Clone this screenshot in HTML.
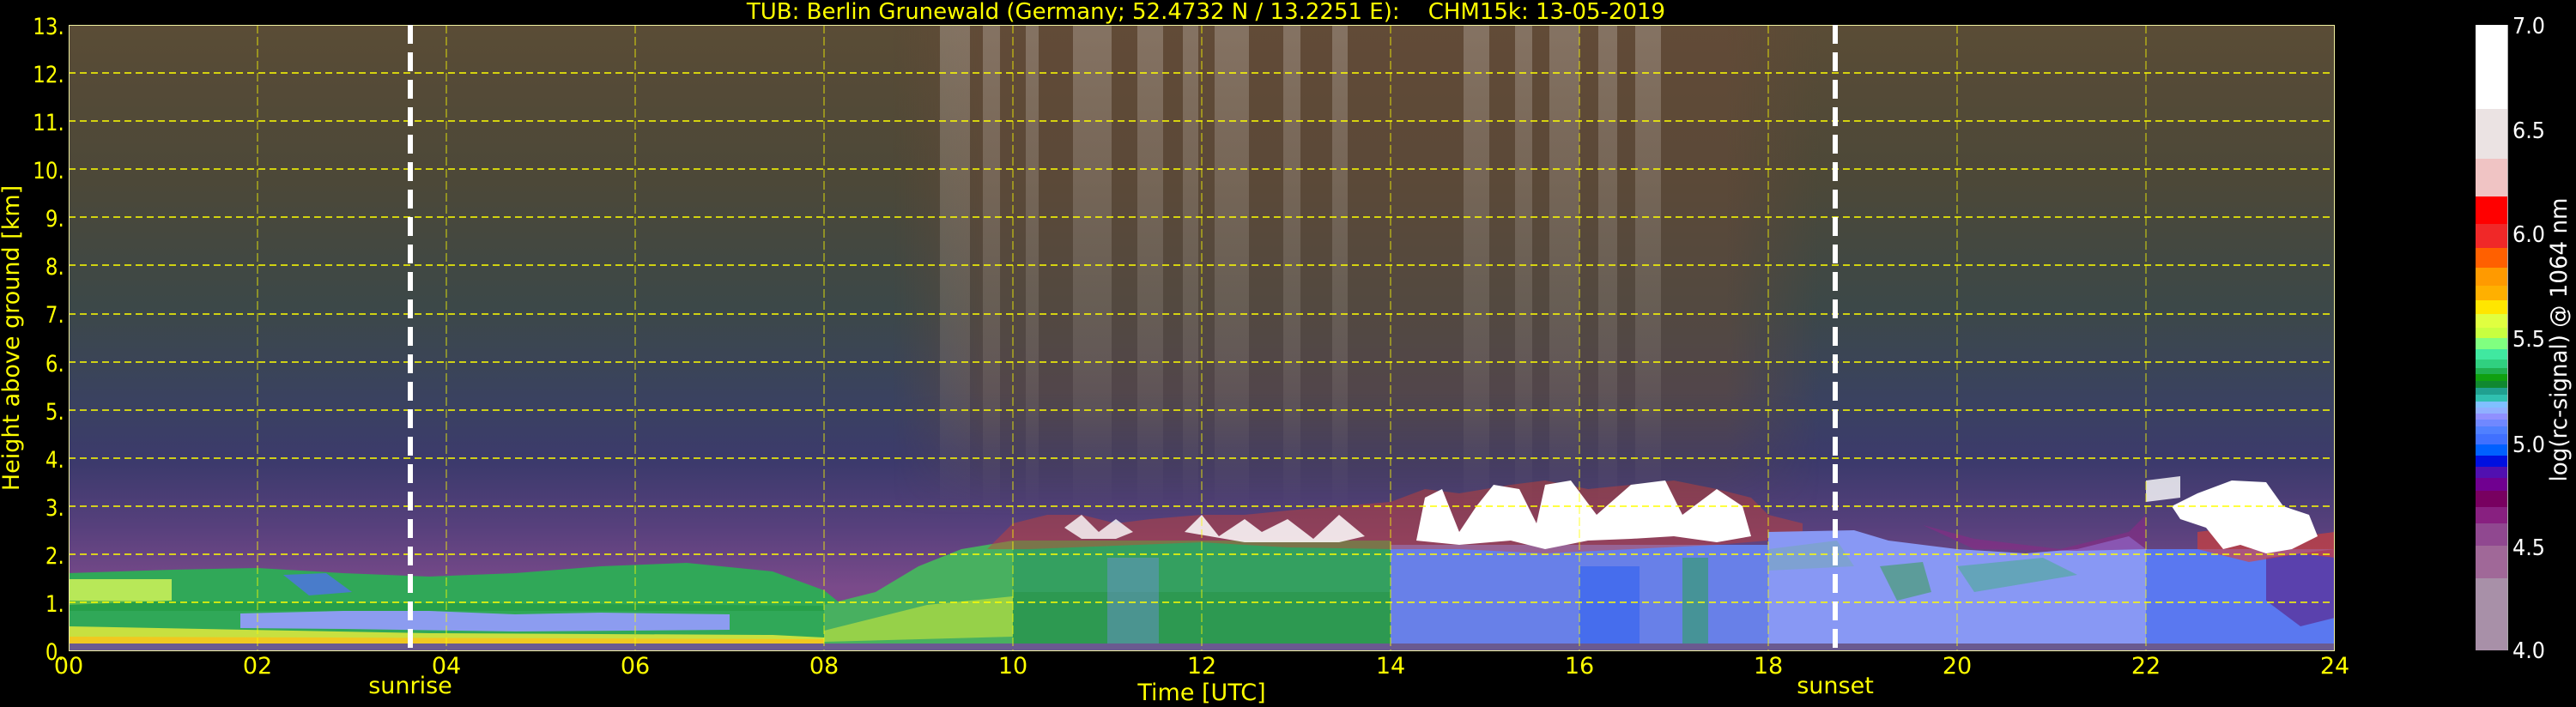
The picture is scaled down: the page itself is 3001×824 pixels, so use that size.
<!DOCTYPE html>
<html><head><meta charset="utf-8"><style>
html,body{margin:0;padding:0;background:#000;width:3001px;height:824px;overflow:hidden}
svg{display:block}
text{font-family:"DejaVu Sans","Liberation Sans",sans-serif}
</style></head><body>
<svg width="3001" height="824" viewBox="0 0 3001 824" xmlns="http://www.w3.org/2000/svg">
<defs>
<linearGradient id="sky" x1="0" y1="29" x2="0" y2="758" gradientUnits="userSpaceOnUse">
<stop offset="0" stop-color="#5a4c36"/>
<stop offset="0.25" stop-color="#4c4838"/>
<stop offset="0.45" stop-color="#3c4848"/>
<stop offset="0.6" stop-color="#3a4260"/>
<stop offset="0.7" stop-color="#3c3a6c"/>
<stop offset="0.8" stop-color="#56407c"/>
<stop offset="0.9" stop-color="#7a4a8a"/>
<stop offset="1" stop-color="#7a4a8a"/>
</linearGradient>
<linearGradient id="hband" x1="0" y1="0" x2="1" y2="0">
<stop offset="0" stop-color="#6a4a38" stop-opacity="0"/>
<stop offset="0.1" stop-color="#6a4a38" stop-opacity="0.5"/>
<stop offset="0.9" stop-color="#6a4a38" stop-opacity="0.5"/>
<stop offset="1" stop-color="#6a4a38" stop-opacity="0"/>
</linearGradient>
<linearGradient id="vfade" x1="0" y1="29" x2="0" y2="600" gradientUnits="userSpaceOnUse">
<stop offset="0" stop-color="#fff" stop-opacity="1"/>
<stop offset="0.75" stop-color="#fff" stop-opacity="1"/>
<stop offset="1" stop-color="#fff" stop-opacity="0"/>
</linearGradient>
<mask id="fm"><rect x="1000" y="29" width="1200" height="571" fill="url(#vfade)"/></mask>
<linearGradient id="wfade" x1="0" y1="29" x2="0" y2="600" gradientUnits="userSpaceOnUse">
<stop offset="0" stop-color="#d8d0c8" stop-opacity="0.3"/>
<stop offset="0.7" stop-color="#c0b8b0" stop-opacity="0.15"/>
<stop offset="1" stop-color="#c0b8b0" stop-opacity="0"/>
</linearGradient>
</defs>
<rect x="80" y="29" width="2640" height="729" fill="url(#sky)"/>
<rect x="1040" y="29" width="1080" height="571" fill="url(#hband)" mask="url(#fm)"/>
<g fill="url(#wfade)">
<rect x="1095" y="29" width="35" height="571"/>
<rect x="1145" y="29" width="20" height="571"/>
<rect x="1195" y="29" width="15" height="571"/>
<rect x="1250" y="29" width="45" height="571"/>
<rect x="1325" y="29" width="30" height="571"/>
<rect x="1378" y="29" width="18" height="571"/>
<rect x="1415" y="29" width="40" height="571"/>
<rect x="1495" y="29" width="20" height="571"/>
<rect x="1552" y="29" width="18" height="571"/>
<rect x="1705" y="29" width="30" height="571"/>
<rect x="1765" y="29" width="20" height="571"/>
<rect x="1805" y="29" width="35" height="571"/>
<rect x="1862" y="29" width="22" height="571"/>
<rect x="1905" y="29" width="30" height="571"/>
</g>
<!-- boundary layer 00-08 -->
<path d="M80 668 L200 664 L300 662 L400 668 L500 672 L600 668 L700 660 L800 656 L900 666 L960 688 L1000 720 L1020 740 L1020 752 L80 752Z" fill="#30a858"/>
<path d="M80 675 L200 675 L200 700 L80 705Z" fill="#b8e858"/>
<path d="M280 715 L400 712 L500 712 L600 716 L700 714 L850 716 L850 734 L600 736 L400 733 L280 732Z" fill="#8c9cf0"/>
<path d="M80 730 L500 738 L900 740 L1000 745 L1000 752 L80 752Z" fill="#c8e040"/>
<path d="M80 742 L960 745 L960 750 L80 750Z" fill="#f0c820"/>
<path d="M80 700 L960 706 L960 712 L80 712Z" fill="#209a40" opacity="0.6"/>
<path d="M330 670 L380 668 L410 690 L360 694Z" fill="#5070e8" opacity="0.8"/>
<!-- 08-10 -->
<path d="M960 705 L1020 690 L1070 660 L1120 640 L1180 630 L1180 752 L960 752Z" fill="#48b060"/>
<path d="M960 735 L1080 705 L1180 695 L1180 742 L960 748Z" fill="#b8e040" opacity="0.7"/>
<!-- 10-14 green -->
<rect x="1180" y="630" width="440" height="122" fill="#34a060"/>
<rect x="1180" y="690" width="440" height="60" fill="#2a9448" opacity="0.6"/>
<rect x="1290" y="650" width="60" height="100" fill="#6a90d0" opacity="0.5"/>
<!-- 14-18 blue -->
<rect x="1620" y="635" width="440" height="117" fill="#6880e8"/>
<rect x="1840" y="660" width="70" height="92" fill="#3060f0" opacity="0.6"/>
<rect x="1960" y="650" width="30" height="100" fill="#30a060" opacity="0.6"/>
<!-- clouds -->
<path d="M1150 640 L1180 610 L1220 600 L1260 600 L1300 610 L1340 605 L1400 600 L1450 600 L1500 595 L1560 590 L1620 585 L1660 570 L1700 575 L1760 565 L1800 560 L1850 570 L1900 565 L1950 560 L2000 570 L2040 580 L2060 600 L2100 610 L2100 625 L2060 630 L2000 635 L1900 640 L1800 645 L1700 640 L1620 640 L1500 638 L1400 632 L1300 636 L1200 640Z" fill="#d04030" opacity="0.45"/>
<path d="M1650 630 L1660 580 L1680 570 L1700 620 L1720 590 L1740 565 L1770 570 L1790 610 L1800 565 L1830 560 L1860 600 L1900 565 L1940 560 L1960 600 L2000 570 L2030 590 L2040 625 L2000 632 L1950 625 L1900 628 L1850 630 L1800 640 L1760 630 L1700 635Z" fill="#ffffff"/>
<path d="M1380 620 L1400 600 L1420 625 L1450 605 L1470 620 L1500 605 L1530 628 L1560 600 L1590 625 L1560 632 L1450 632Z" fill="#ffffff" opacity="0.85"/>
<path d="M1240 615 L1260 600 L1280 620 L1300 605 L1320 620 L1300 628 L1260 628Z" fill="#ffffff" opacity="0.8"/>
<!-- 18-22 -->
<path d="M2060 620 L2160 618 L2200 630 L2280 640 L2360 645 L2420 640 L2480 625 L2500 640 L2500 752 L2060 752Z" fill="#8898f4"/>
<path d="M2240 612 L2300 628 L2400 640 L2480 620 L2500 600 L2500 640 L2420 642 L2300 640Z" fill="#8a2a86" opacity="0.6"/>
<path d="M2280 660 L2380 650 L2420 670 L2300 690Z" fill="#40b080" opacity="0.5"/>
<path d="M2190 660 L2240 655 L2250 690 L2210 700Z" fill="#30a040" opacity="0.5"/>
<path d="M2060 640 L2140 630 L2160 660 L2060 665Z" fill="#70b0a0" opacity="0.4"/>
<!-- 22-24 -->
<rect x="2500" y="640" width="220" height="112" fill="#5a78f0"/>
<path d="M2640 650 L2720 640 L2720 720 L2680 730 L2640 700Z" fill="#5a2a90" opacity="0.7"/>
<path d="M2560 620 L2600 615 L2640 618 L2680 625 L2720 620 L2720 650 L2680 645 L2620 655 L2560 640Z" fill="#e04030" opacity="0.6"/>
<path d="M2530 590 L2560 575 L2600 560 L2640 562 L2660 590 L2690 600 L2700 625 L2670 640 L2640 645 L2610 635 L2590 640 L2570 615 L2540 605Z" fill="#ffffff"/>
<path d="M2500 560 L2540 555 L2540 580 L2500 585Z" fill="#ffffff" opacity="0.8"/>
<rect x="80" y="750" width="2640" height="8" fill="#6a5a90"/>
<!-- grid -->
<g stroke="#ffff00" stroke-width="1.5" stroke-dasharray="8,5" fill="none">
<line x1="80" y1="702" x2="2720" y2="702"/><line x1="80" y1="646" x2="2720" y2="646"/>
<line x1="80" y1="590" x2="2720" y2="590"/><line x1="80" y1="534" x2="2720" y2="534"/>
<line x1="80" y1="478" x2="2720" y2="478"/><line x1="80" y1="422" x2="2720" y2="422"/>
<line x1="80" y1="366" x2="2720" y2="366"/><line x1="80" y1="309" x2="2720" y2="309"/>
<line x1="80" y1="253" x2="2720" y2="253"/><line x1="80" y1="197" x2="2720" y2="197"/>
<line x1="80" y1="141" x2="2720" y2="141"/><line x1="80" y1="85" x2="2720" y2="85"/>
</g>
<g stroke="#ffff00" stroke-width="1" stroke-dasharray="10,4" opacity="0.8">
<line x1="300" y1="29" x2="300" y2="758"/><line x1="520" y1="29" x2="520" y2="758"/>
<line x1="740" y1="29" x2="740" y2="758"/><line x1="960" y1="29" x2="960" y2="758"/>
<line x1="1180" y1="29" x2="1180" y2="758"/><line x1="1400" y1="29" x2="1400" y2="758"/>
<line x1="1620" y1="29" x2="1620" y2="758"/><line x1="1840" y1="29" x2="1840" y2="758"/>
<line x1="2060" y1="29" x2="2060" y2="758"/><line x1="2280" y1="29" x2="2280" y2="758"/>
<line x1="2500" y1="29" x2="2500" y2="758"/>
</g>
<rect x="80.5" y="29.5" width="2639" height="729" fill="none" stroke="#f0f0a0" stroke-width="1"/>
<g stroke="#ffffff" stroke-width="6" stroke-dasharray="22,10">
<line x1="478" y1="29" x2="478" y2="758"/><line x1="2138" y1="29" x2="2138" y2="758"/>
</g>
<g fill="#ffff00" font-size="27">
<text x="1405" y="22" text-anchor="middle" font-size="26" xml:space="preserve">TUB: Berlin Grunewald (Germany; 52.4732 N / 13.2251 E):    CHM15k: 13-05-2019</text>
<g text-anchor="end" transform="scale(0.85,1)">
<text x="88" y="40">13.</text><text x="88" y="96">12.</text><text x="88" y="152">11.</text>
<text x="88" y="208">10.</text><text x="88" y="264">9.</text><text x="88" y="320">8.</text>
<text x="88" y="376">7.</text><text x="88" y="433">6.</text><text x="88" y="489">5.</text>
<text x="88" y="545">4.</text><text x="88" y="601">3.</text><text x="88" y="657">2.</text>
<text x="88" y="713">1.</text><text x="88" y="769">0.</text>
</g>
<text transform="translate(22,394) rotate(-90)" text-anchor="middle" font-size="27">Height above ground [km]</text>
<g text-anchor="middle">
<text x="80" y="785">00</text><text x="300" y="785">02</text><text x="520" y="785">04</text>
<text x="740" y="785">06</text><text x="960" y="785">08</text><text x="1180" y="785">10</text>
<text x="1400" y="785">12</text><text x="1620" y="785">14</text><text x="1840" y="785">16</text>
<text x="2060" y="785">18</text><text x="2280" y="785">20</text><text x="2500" y="785">22</text>
<text x="2720" y="785">24</text>
<text x="478" y="808">sunrise</text><text x="2138" y="808">sunset</text>
<text x="1400" y="816">Time [UTC]</text>
</g>
</g>
<g>
<rect x="2884" y="29" width="37" height="99" fill="#ffffff"/>
<rect x="2884" y="127" width="37" height="59" fill="#ebe3e3"/>
<rect x="2884" y="185" width="37" height="45" fill="#f0c4c4"/>
<rect x="2884" y="229" width="37" height="33" fill="#ff0000"/>
<rect x="2884" y="261" width="37" height="29" fill="#f02828"/>
<rect x="2884" y="289" width="37" height="24" fill="#ff6000"/>
<rect x="2884" y="312" width="37" height="22" fill="#ff9a00"/>
<rect x="2884" y="333" width="37" height="18" fill="#ffb000"/>
<rect x="2884" y="350" width="37" height="17" fill="#ffe600"/>
<rect x="2884" y="366" width="37" height="17" fill="#e0ff40"/>
<rect x="2884" y="382" width="37" height="13" fill="#c8ff40"/>
<rect x="2884" y="394" width="37" height="14" fill="#80ff80"/>
<rect x="2884" y="407" width="37" height="13" fill="#40e8a0"/>
<rect x="2884" y="419" width="37" height="11" fill="#30d080"/>
<rect x="2884" y="429" width="37" height="8" fill="#20b050"/>
<rect x="2884" y="436" width="37" height="9" fill="#10a010"/>
<rect x="2884" y="444" width="37" height="9" fill="#108830"/>
<rect x="2884" y="452" width="37" height="9" fill="#20a090"/>
<rect x="2884" y="460" width="37" height="9" fill="#30c0b0"/>
<rect x="2884" y="468" width="37" height="8" fill="#80c0ff"/>
<rect x="2884" y="475" width="37" height="8" fill="#90b0ff"/>
<rect x="2884" y="482" width="37" height="8" fill="#9090ff"/>
<rect x="2884" y="489" width="37" height="9" fill="#7088ff"/>
<rect x="2884" y="497" width="37" height="10" fill="#5080ff"/>
<rect x="2884" y="506" width="37" height="13" fill="#4070ff"/>
<rect x="2884" y="518" width="37" height="14" fill="#0060ff"/>
<rect x="2884" y="531" width="37" height="14" fill="#0010e0"/>
<rect x="2884" y="544" width="37" height="14" fill="#5010b0"/>
<rect x="2884" y="557" width="37" height="16" fill="#700090"/>
<rect x="2884" y="572" width="37" height="20" fill="#780060"/>
<rect x="2884" y="591" width="37" height="20" fill="#882080"/>
<rect x="2884" y="610" width="37" height="27" fill="#904890"/>
<rect x="2884" y="636" width="37" height="39" fill="#a06898"/>
<rect x="2884" y="674" width="37" height="84" fill="#a890a8"/>
<line x1="2921.5" y1="29" x2="2921.5" y2="758" stroke="#aaa" stroke-width="1"/>
</g>
<g fill="#ffffff" font-size="26">
<text x="2927" y="39" textLength="38" lengthAdjust="spacingAndGlyphs">7.0</text>
<text x="2927" y="161" textLength="38" lengthAdjust="spacingAndGlyphs">6.5</text>
<text x="2927" y="282" textLength="38" lengthAdjust="spacingAndGlyphs">6.0</text>
<text x="2927" y="404" textLength="38" lengthAdjust="spacingAndGlyphs">5.5</text>
<text x="2927" y="527" textLength="38" lengthAdjust="spacingAndGlyphs">5.0</text>
<text x="2927" y="647" textLength="38" lengthAdjust="spacingAndGlyphs">4.5</text>
<text x="2927" y="767" textLength="38" lengthAdjust="spacingAndGlyphs">4.0</text>
<text transform="translate(2990,396) rotate(-90)" text-anchor="middle" font-size="27" textLength="331" lengthAdjust="spacingAndGlyphs">log(rc-signal) @ 1064 nm</text>
</g>
</svg>
</body></html>
